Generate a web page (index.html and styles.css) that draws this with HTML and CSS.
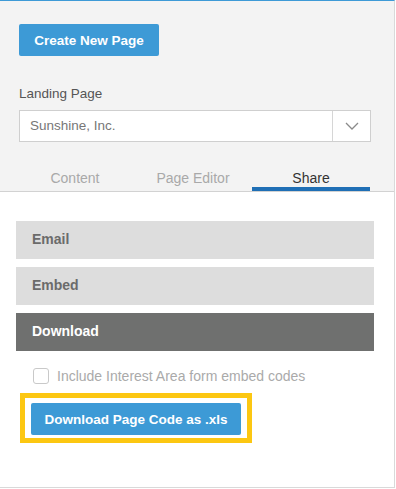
FILE: index.html
```html
<!DOCTYPE html>
<html>
<head>
<meta charset="utf-8">
<link rel="stylesheet" href="styles.css">
</head>
<body>
<div class="panel">
  <div class="top">
    <div class="form">
      <button class="btn btn-create">Create New Page</button>
      <div class="label">Landing Page</div>
      <div class="select">
        <span class="select-value">Sunshine, Inc.</span>
        <span class="select-arrow">
          <svg width="14" height="8" viewBox="0 0 14 8"><polyline points="1,1 7,7 13,1" fill="none" stroke="#8a8a8a" stroke-width="1.3"/></svg>
        </span>
      </div>
    </div>
    <div class="tabs">
      <div class="tab">Content</div>
      <div class="tab">Page Editor</div>
      <div class="tab tab-active">Share</div>
    </div>
  </div>
  <div class="bottom">
    <div class="bar">Email</div>
    <div class="bar">Embed</div>
    <div class="bar bar-active">Download</div>
    <label class="check-row">
      <span class="checkbox"></span>
      <span class="check-label">Include Interest Area form embed codes</span>
    </label>
    <div class="highlight">
      <button class="btn btn-download">Download Page Code as .xls</button>
    </div>
  </div>
</div>
</body>
</html>
```
FILE: styles.css
```css
html, body {
  margin: 0;
  padding: 0;
  background: #ffffff;
}
body {
  font-family: "Liberation Sans", Arial, sans-serif;
}
.panel {
  width: 395px;
  height: 488px;
  box-sizing: border-box;
  border-top: 1px solid #3d9ad6;
  border-right: 1px solid #d9d9d9;
  border-bottom: 1px solid #d9d9d9;
  display: flex;
  flex-direction: column;
}
.top {
  background: #f3f3f3;
  border-bottom: 1px solid #d2d2d2;
}
.form {
  padding: 23px 23px 0 19px;
}
.btn {
  display: block;
  border: none;
  border-radius: 2px;
  background: #3d9ad6;
  color: #ffffff;
  font-family: "Liberation Sans", Arial, sans-serif;
  font-weight: 700;
  font-size: 13.5px;
  height: 32px;
  padding: 0;
  text-align: center;
}
.btn-create {
  width: 140px;
}
.label {
  margin-top: 30px;
  font-size: 13.5px;
  line-height: 16px;
  color: #555555;
}
.select {
  margin-top: 8px;
  height: 32px;
  box-sizing: border-box;
  border: 1px solid #cfcfcf;
  background: #ffffff;
  display: flex;
  align-items: stretch;
}
.select-value {
  flex: 1;
  padding-left: 10px;
  font-size: 13.5px;
  line-height: 29px;
  color: #777777;
}
.select-arrow {
  width: 37px;
  border-left: 1px solid #d6d6d6;
  display: flex;
  align-items: center;
  justify-content: center;
}
.tabs {
  display: flex;
  margin: 28px 24px 0 16px;
}
.tab {
  flex: 1;
  text-align: center;
  font-size: 14px;
  line-height: 16px;
  color: #a9a9a9;
  padding-bottom: 1px;
  border-bottom: 4px solid transparent;
}
.tab-active {
  color: #333333;
  border-bottom-color: #1f6fb5;
}
.bottom {
  flex: 1;
  padding: 29px 20px 0 16px;
  display: flex;
  flex-direction: column;
  align-items: flex-start;
}
.bar {
  align-self: stretch;
  height: 38px;
  line-height: 36px;
  margin-bottom: 8px;
  padding-left: 16px;
  background: #dddddd;
  color: #6b6b6b;
  font-weight: 700;
  font-size: 14px;
}
.bar-active {
  background: #6f706f;
  color: #ffffff;
  margin-bottom: 0;
}
.check-row {
  margin-top: 17px;
  margin-left: 17px;
  display: flex;
  align-items: center;
  height: 16px;
}
.checkbox {
  width: 16px;
  height: 16px;
  box-sizing: border-box;
  border: 1px solid #c9c9c9;
  border-radius: 3px;
  background: #ffffff;
}
.check-label {
  margin-left: 8px;
  font-size: 14px;
  line-height: 16px;
  color: #aaaaaa;
}
.highlight {
  margin-top: 9px;
  margin-left: 4px;
  border: 5px solid #fcc712;
  padding: 5px 6px 3px 6px;
}
.btn-download {
  width: 210px;
}
```
